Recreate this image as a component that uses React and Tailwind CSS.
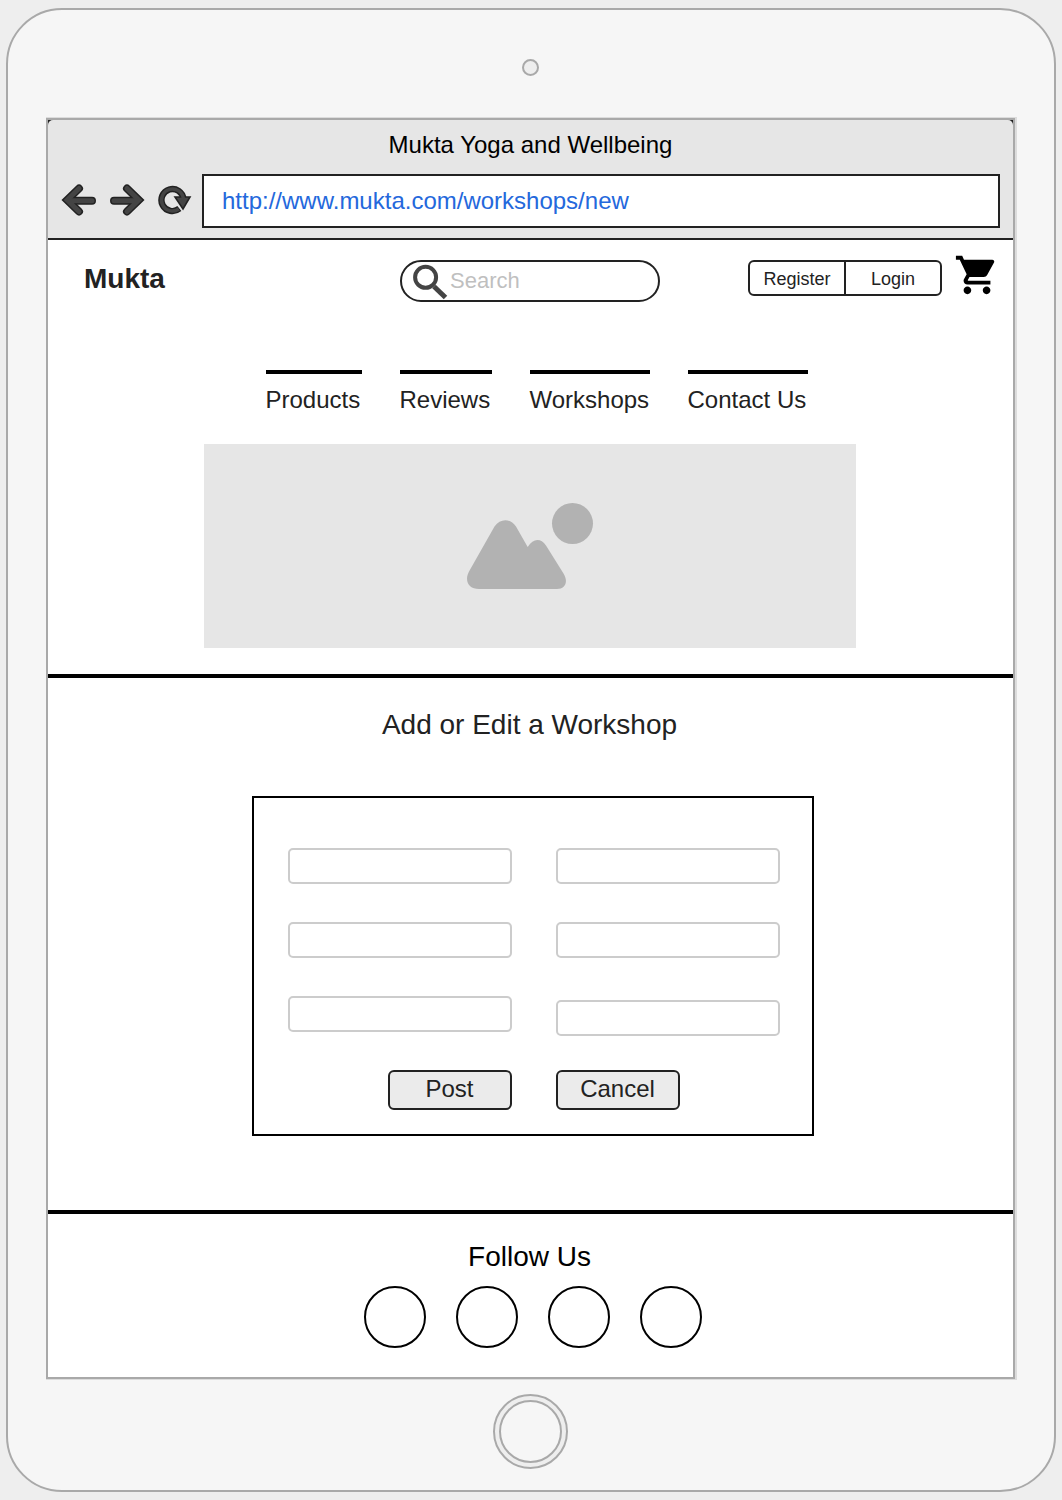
import React from "react";

const navItems = [
  { label: "Products", width: "w-24" },
  { label: "Reviews", width: "w-[92px]" },
  { label: "Workshops", width: "w-[120px]" },
  { label: "Contact Us", width: "w-[120px]" },
];

const socials = ["Facebook", "Instagram", "Twitter", "YouTube"];

function BackArrow() {
  return (
    <svg width="36" height="36" viewBox="0 1 36 36" fill="none" strokeLinecap="round">
      <g stroke="#222" strokeWidth="8">
        <path d="M18 6.5 6.2 18 18 29.5" />
        <path d="M8 18.7H31" />
      </g>
      <g stroke="#444" strokeWidth="5">
        <path d="M18 6.5 6.2 18 18 29.5" />
        <path d="M8 18.7H31" />
      </g>
    </svg>
  );
}

function ForwardArrow() {
  return (
    <svg width="36" height="36" viewBox="0 1 36 36" fill="none" strokeLinecap="round">
      <g stroke="#222" strokeWidth="8">
        <path d="M18 6.5 29.8 18 18 29.5" />
        <path d="M28 18.7H5" />
      </g>
      <g stroke="#444" strokeWidth="5">
        <path d="M18 6.5 29.8 18 18 29.5" />
        <path d="M28 18.7H5" />
      </g>
    </svg>
  );
}

function ReloadIcon() {
  return (
    <svg width="36" height="36" viewBox="0 1 36 36" fill="none">
      <path d="M26.4 17A11 11 0 1 0 22.4 26.6" stroke="#222" strokeWidth="6.4" />
      <path d="M18 15H33L26 27Z" fill="#444" stroke="#222" strokeWidth="1.6" />
      <path d="M26.4 17A11 11 0 1 0 21.8 27" stroke="#444" strokeWidth="3.4" />
    </svg>
  );
}

function BrowserBar() {
  return (
    <div className="bg-[#222]">
      <div className="rounded-t-[5px] border-b-2 border-[#222] bg-[#e6e6e6] px-[13px] pt-[9px] pb-[10px]">
        <p className="text-center text-2xl leading-8 text-black">Mukta Yoga and Wellbeing</p>
        <div className="mt-[13px] flex items-center">
          <div className="flex gap-3 pr-[9px]">
            <button aria-label="Back"><BackArrow /></button>
            <button aria-label="Forward"><ForwardArrow /></button>
            <button aria-label="Reload"><ReloadIcon /></button>
          </div>
          <input
            aria-label="Address"
            defaultValue="http://www.mukta.com/workshops/new"
            className="h-[54px] min-w-0 flex-1 border-2 border-[#222] bg-white px-[18px] text-2xl text-[#2468dc] outline-none"
          />
        </div>
      </div>
    </div>
  );
}

function SiteHeader() {
  return (
    <header className="grid grid-cols-[1fr_auto_1fr] items-start pt-3 pr-[13px] pl-3">
      <a href="#home" className="pt-[11px] pl-6 text-[28px] leading-8 font-bold">
        Mukta
      </a>
      <label className="mt-2 flex h-[42px] w-[260px] items-center rounded-full border-2 border-[#222] pl-2">
        <svg className="shrink-0" width="38" height="38" viewBox="0 0 38 38" fill="none" stroke="#444">
          <circle cx="15.6" cy="15.3" r="10.5" strokeWidth="4" />
          <path d="M24 24.5 35.5 35.5" strokeWidth="5" />
        </svg>
        <input
          type="search"
          aria-label="Search"
          placeholder="Search"
          className="min-w-0 flex-1 bg-transparent pb-[2px] pl-[2px] text-[22px] outline-none placeholder:text-[#bfbfbf]"
        />
      </label>
      <div className="flex items-start justify-end gap-3">
        <div className="mt-2 flex h-9 w-[194px] divide-x-2 divide-[#222] rounded-md border-2 border-[#222] text-lg leading-8">
          <button className="flex-1 pt-[1px]">Register</button>
          <button className="flex-1 pt-[1px]">Login</button>
        </div>
        <button aria-label="Shopping cart">
          <svg width="46" height="46" viewBox="0 0 24 24" fill="#000">
            <path d="M7 18c-1.1 0-1.99.9-1.99 2S5.9 22 7 22s2-.9 2-2-.9-2-2-2zM1 2v2h2l3.6 7.59-1.35 2.45c-.16.28-.25.61-.25.96 0 1.1.9 2 2 2h12v-2H7.42c-.14 0-.25-.11-.25-.25l.03-.12.9-1.63h7.45c.75 0 1.41-.41 1.75-1.03l3.58-6.49c.08-.14.12-.31.12-.48 0-.55-.45-1-1-1H5.21l-.94-2H1zm16 16c-1.1 0-1.99.9-1.99 2s.89 2 1.99 2 2-.9 2-2-.9-2-2-2z" />
          </svg>
        </button>
      </div>
    </header>
  );
}

function Field({ label, className = "" }) {
  return (
    <input
      aria-label={label}
      className={`h-9 w-full rounded-[5px] border-2 border-[#ccc] bg-white px-2 text-lg outline-none ${className}`}
    />
  );
}

function WorkshopForm() {
  const button = "h-10 w-[124px] rounded-md border-2 border-[#222] bg-[#ebebeb] pb-[2px] text-2xl leading-8";
  return (
    <form
      onSubmit={(e) => e.preventDefault()}
      className="grid w-full max-w-[562px] grid-cols-2 gap-x-11 border-2 border-black pt-[50px] pr-8 pb-6 pl-[34px]"
    >
      <div className="flex flex-col gap-[38px]">
        <Field label="Title" />
        <Field label="Date" />
        <Field label="Location" />
      </div>
      <div className="flex flex-col gap-[38px]">
        <Field label="Teacher" />
        <Field label="Time" />
        <Field label="Price" className="mt-1" />
      </div>
      <div className="flex justify-end pt-[34px]">
        <button type="submit" className={button}>Post</button>
      </div>
      <div className="pt-[34px]">
        <button type="button" className={button}>Cancel</button>
      </div>
    </form>
  );
}

export default function App() {
  return (
    <div className="min-h-screen bg-[#eeeeee] px-[6px] py-2 font-['Liberation_Sans',Arial,sans-serif] text-[#222]">
      <div className="flex flex-col items-stretch rounded-[56px] border-2 border-[#a9a9a9] bg-[#f6f6f6] pr-[39px] pb-[21px] pl-[38px]">
        <div className="mt-[49px] mb-[42px] size-[17px] self-center rounded-full border-2 border-[#a9a9a9] bg-[#eeeeee]" />

        <div className="border-2 border-[#a9a9a9] bg-white shadow-[1px_0_0_1px_#dcdcdc]">
          <BrowserBar />
          <SiteHeader />

          <nav className="mt-[68px] flex justify-center gap-[38px] pl-3">
            {navItems.map((item) => (
              <a
                key={item.label}
                href="#"
                className={`border-t-4 border-black pt-[10px] text-2xl leading-8 whitespace-nowrap ${item.width}`}
              >
                {item.label}
              </a>
            ))}
          </nav>

          <div className="mt-7 flex justify-center pr-[1px]">
            <div className="flex h-[204px] w-full max-w-[652px] items-center justify-center bg-[#e6e6e6]">
              <svg width="128" height="88" viewBox="0 0 128 88" fill="#b2b2b2" role="img" aria-label="Banner image">
                <path d="M28.5 24.5C34.5 16 44 16 50 24.5L61.7 45C67 36.5 74.5 35.5 80 43.5L97.5 71.5C102.500 79.500 99.500 87 91 87H13C3 87-2 79 3 69.500Z" />
                <circle cx="106.500" cy="21.500" r="20.500" />
              </svg>
            </div>
          </div>

          <section className="mt-[26px] flex flex-col items-center border-y-4 border-black pt-[31px] pb-[74px]">
            <h1 className="pr-[2px] text-[28px] leading-8">Add or Edit a Workshop</h1>
            <div className="mt-[55px] flex w-full justify-center pl-1">
              <WorkshopForm />
            </div>
          </section>

          <footer className="flex flex-col items-center pt-[27px] pb-[29px] text-black">
            <h2 className="pr-[2px] text-[28px] leading-8">Follow Us</h2>
            <div className="mt-[13px] flex gap-[30px] pl-1">
              {socials.map((name) => (
                <a key={name} href="#" aria-label={name} className="size-[62px] rounded-full border-2 border-black" />
              ))}
            </div>
          </footer>
        </div>

        <button
          aria-label="Home"
          className="mt-[15px] flex size-[75px] items-center justify-center self-center rounded-full border-2 border-[#a9a9a9] bg-[#eeeeee]"
        >
          <span className="size-[63px] rounded-full border-2 border-[#a9a9a9] bg-[#f6f6f6]" />
        </button>
      </div>
    </div>
  );
}
